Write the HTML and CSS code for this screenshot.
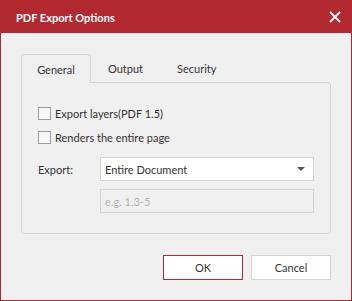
FILE: index.html
```html
<!DOCTYPE html>
<html lang="en">
<head>
    <meta charset="UTF-8">
    <title>PDF Export Options</title>
    <link rel="stylesheet" href="styles.css">
</head>
<body>
    <div class="dialog">
        <div class="titlebar">
            <span class="title">PDF Export Options</span>
            <span class="close">
                <svg width="12" height="12" viewBox="0 0 12 12">
                    <path d="M1 1 L11 11 M11 1 L1 11" stroke="#fff" stroke-width="1.8" fill="none"/>
                </svg>
            </span>
        </div>
        <div class="content">
            <div class="tabs">
                <div class="tab active">General</div>
                <div class="tab">Output</div>
                <div class="tab">Security</div>
            </div>
            <div class="panel">
                <label class="check-row"><span class="checkbox"></span>Export layers(PDF 1.5)</label>
                <label class="check-row"><span class="checkbox"></span>Renders the entire page</label>
                <div class="field-row">
                    <span class="field-label">Export:</span>
                    <div class="select">
                        <span>Entire Document</span>
                        <span class="arrow"></span>
                    </div>
                </div>
                <div class="field-row">
                    <span class="field-label"></span>
                    <div class="input disabled">e.g. 1,3-5</div>
                </div>
            </div>
            <div class="buttons">
                <button class="btn primary">OK</button>
                <button class="btn">Cancel</button>
            </div>
        </div>
    </div>
</body>
</html>
```

FILE: styles.css
```css
:root {
    --brand-color: #b2292f;
    --bg-color: #f0f0f0;
    --border-color: #d4d4d4;
    --text-color: #333333;
}

* {
    box-sizing: border-box;
    margin: 0;
    padding: 0;
}

body {
    font-family: Lato, "Open Sans", Arial, sans-serif;
    font-size: 11px;
    color: var(--text-color);
    background: #ffffff;
}

.dialog {
    width: 352px;
    height: 301px;
    border: 1px solid var(--brand-color);
    background-color: var(--bg-color);
    display: flex;
    flex-direction: column;
}

.titlebar {
    height: 32px;
    background-color: var(--brand-color);
    color: #ffffff;
    display: flex;
    align-items: center;
    justify-content: space-between;
    padding: 0 10px 0 15px;
}

.title {
    font-weight: 700;
    font-size: 11px;
}

.close {
    display: flex;
    width: 12px;
    height: 12px;
}

.content {
    padding: 21px 20px 0 20px;
}

/* 选项卡 */
.tabs {
    display: flex;
    height: 28px;
}

.tab {
    padding: 0 16px;
    display: flex;
    align-items: center;
    border: 1px solid transparent;
    border-bottom: none;
}

.tab.active {
    width: 70px;
    justify-content: center;
    padding: 0;
    border-color: var(--border-color);
    border-radius: 3px 3px 0 0;
    background-color: var(--bg-color);
    position: relative;
    z-index: 1;
    height: 29px;
}

.panel {
    border: 1px solid var(--border-color);
    border-radius: 0 3px 3px 3px;
    padding: 20px 16px 20px 16px;
}

.check-row {
    display: flex;
    align-items: center;
    height: 20px;
    margin-bottom: 4px;
}

.checkbox {
    width: 13px;
    height: 13px;
    border: 1px solid #9c9c9c;
    background-color: #f7f7f7;
    margin-right: 4px;
}

.field-row {
    display: flex;
    align-items: center;
    margin-top: 8px;
}

.check-row + .field-row {
    margin-top: 10px;
}

.field-label {
    width: 62px;
    flex-shrink: 0;
}

.select,
.input {
    flex: 1;
    height: 24px;
    border: 1px solid var(--border-color);
    padding: 0 8px 0 4px;
    display: flex;
    align-items: center;
    justify-content: space-between;
}

.select {
    background-color: #ffffff;
}

.arrow {
    width: 0;
    height: 0;
    border-left: 4px solid transparent;
    border-right: 4px solid transparent;
    border-top: 4px solid #555555;
}

.input.disabled {
    background-color: var(--bg-color);
    color: #b0b0b0;
}

.buttons {
    display: flex;
    justify-content: flex-end;
    gap: 8px;
    margin-top: 21px;
}

.btn {
    width: 80px;
    height: 25px;
    font-family: inherit;
    font-size: 11px;
    color: var(--text-color);
    background-color: #ffffff;
    border: 1px solid var(--border-color);
}

.btn.primary {
    border-color: var(--brand-color);
}
```
